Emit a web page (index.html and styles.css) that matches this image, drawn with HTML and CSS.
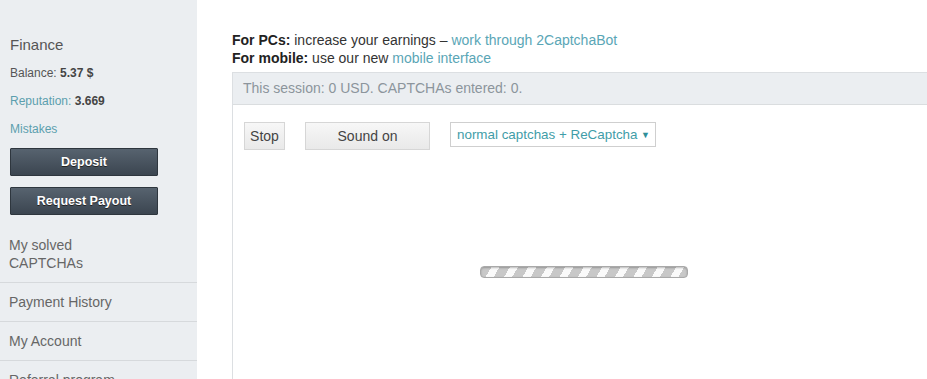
FILE: index.html
```html
<!DOCTYPE html>
<html lang="en">
<head>
    <meta charset="UTF-8">
    <meta name="viewport" content="width=device-width, initial-scale=1.0">
    <title>Work - 2Captcha</title>
    <link rel="stylesheet" href="styles.css">
</head>
<body>

    <!-- Left sidebar -->
    <div class="sidebar">
        <div class="finance">
            <div class="finance-title">Finance</div>
            <div class="finance-row">Balance: <b>5.37 $</b></div>
            <div class="finance-row"><a href="#">Reputation:</a> <b>3.669</b></div>
            <div class="finance-row"><a href="#">Mistakes</a></div>
            <button class="dark-btn">Deposit</button>
            <button class="dark-btn">Request Payout</button>
        </div>

        <ul class="nav">
            <li>My solved<br>CAPTCHAs</li>
            <li>Payment History</li>
            <li>My Account</li>
            <li>Referral program</li>
        </ul>
    </div>

    <!-- Work area -->
    <div class="main">
        <div class="notice">
            <div><b>For PCs:</b> increase your earnings &ndash; <a href="#">work through 2CaptchaBot</a></div>
            <div><b>For mobile:</b> use our new <a href="#">mobile interface</a></div>
        </div>

        <div class="work-box">
            <div class="session">This session: 0 USD. CAPTCHAs entered: 0.</div>

            <div class="controls">
                <button class="light-btn btn-stop">Stop</button>
                <button class="light-btn btn-sound">Sound on</button>
                <div class="type-select">
                    <span>normal captchas + ReCaptcha</span>
                    <span class="arrow">&#9660;</span>
                </div>
            </div>

            <div class="loading">
                <div class="progress"></div>
            </div>
        </div>
    </div>

</body>
</html>
```

FILE: styles.css
```css
body {
    font-family: "Liberation Sans", Arial, sans-serif;
    margin: 0;
    padding: 0;
    display: flex;
    min-height: 100vh;
    background: #fff;
    color: #333;
    font-size: 14px;
    overflow: hidden;
}
a {
    color: #5aa6b6;
    text-decoration: none;
}

/* sidebar */
.sidebar {
    width: 197px;
    flex-shrink: 0;
    background-color: #ebeef1;
}
.finance {
    padding: 31px 0 0 10px;
}
.finance-title {
    font-size: 15px;
    line-height: 28px;
    color: #555;
}
.finance-row {
    font-size: 12px;
    line-height: 28px;
    color: #555;
}
.finance-row b {
    color: #444;
}
.finance-row a {
    color: #5b9fae;
}
.dark-btn {
    display: block;
    width: 148px;
    height: 28px;
    margin-top: 5px;
    padding: 0;
    font-family: inherit;
    font-size: 12.5px;
    font-weight: bold;
    color: #fff;
    text-shadow: 0 1px 0 #222;
    background: linear-gradient(#57636f, #3b4550);
    border: 1px solid #2e363e;
    border-radius: 1px;
}
.dark-btn + .dark-btn {
    margin-top: 11px;
}
.nav {
    list-style: none;
    margin: 11px 0 0;
    padding: 0;
}
.nav li {
    padding: 10px 9px;
    line-height: 18px;
    color: #666;
    border-bottom: 1px solid #d6d9dc;
}

/* main area */
.main {
    flex: 1;
    padding: 31px 0 0 35px;
    display: flex;
    flex-direction: column;
}
.notice {
    line-height: 18px;
    color: #333;
}
.notice b {
    color: #222;
}
.work-box {
    flex: 1;
    margin-top: 5px;
    border: 1px solid #dcdfe2;
    border-right: none;
    border-bottom: none;
}
.session {
    height: 31px;
    line-height: 31px;
    padding-left: 10px;
    background-color: #ebeef1;
    border-bottom: 1px solid #dadddf;
    color: #8c959c;
}
.controls {
    display: flex;
    gap: 20px;
    padding: 17px 0 0 11px;
    align-items: flex-start;
}
.light-btn {
    height: 28px;
    padding: 0;
    font-family: inherit;
    font-size: 14px;
    color: #444;
    background: linear-gradient(#f7f7f7, #e9e9e9);
    border: 1px solid #d6d6d6;
}
.btn-stop {
    width: 41px;
}
.btn-sound {
    width: 125px;
}
.type-select {
    width: 206px;
    height: 25px;
    box-sizing: border-box;
    border: 1px solid #cfcfcf;
    display: flex;
    justify-content: space-between;
    align-items: center;
    padding: 0 5px 0 6px;
    font-size: 13.4px;
    white-space: nowrap;
    color: #3f9da8;
}
.type-select .arrow {
    font-size: 9px;
    color: #2f8f99;
}
.loading {
    display: flex;
    justify-content: center;
    padding: 116px 0 0 8px;
}
.progress {
    width: 206px;
    height: 10px;
    border: 1px solid #a9a9a9;
    border-radius: 4px;
    background: repeating-linear-gradient(120deg, #c8c8c8 0 9px, #fafafa 9px 16px);
    box-shadow: inset 0 1px 2px rgba(0, 0, 0, 0.25);
}
```
